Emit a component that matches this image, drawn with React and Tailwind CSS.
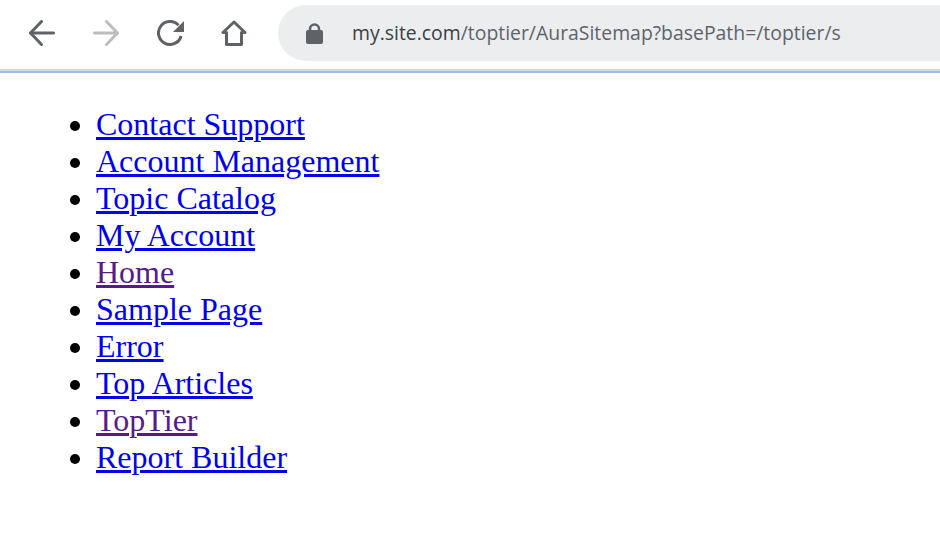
const links = [
  { label: 'Contact Support' },
  { label: 'Account Management' },
  { label: 'Topic Catalog' },
  { label: 'My Account' },
  { label: 'Home', visited: true },
  { label: 'Sample Page' },
  { label: 'Error' },
  { label: 'Top Articles' },
  { label: 'TopTier', visited: true },
  { label: 'Report Builder' },
];

const Toolbar = () => (
  <div className="overflow-hidden">
    <div className="flex items-start h-[69px]">
      <div className="flex items-center h-[66px] pl-[29px] w-[278px] shrink-0 gap-[38px]">
        {/* Back */}
        <svg width="26" height="26" viewBox="0 0 26 26" fill="none" stroke="#5f6368" strokeWidth="3" strokeLinecap="round" strokeLinejoin="round">
          <path d="M24.5 13H2" />
          <path d="M12.5 1.5 1.5 13l11 11.5" />
        </svg>
        {/* Forward */}
        <svg width="26" height="26" viewBox="0 0 26 26" fill="none" stroke="#bdbdbd" strokeWidth="3" strokeLinecap="round" strokeLinejoin="round">
          <path d="M1.5 13H24" />
          <path d="M13.5 1.5 24.5 13l-11 11.5" />
        </svg>
        {/* Reload */}
        <svg width="27" height="26" viewBox="0 0 27 26" fill="none">
          <path d="M21.5 5.2A11.5 11.5 0 1 0 24.1 16" stroke="#5f6368" strokeWidth="3" />
          <path d="M27 1v11H16z" fill="#5f6368" />
        </svg>
        {/* Home */}
        <svg className="-ml-[1px]" width="26" height="26" viewBox="0 0 26 26" fill="none" stroke="#5f6368" strokeWidth="3" strokeLinejoin="round">
          <path d="M13 2 2 12.5h3.5v12h15v-12H24z" />
        </svg>
      </div>
      <div className="mt-[5px] h-[56px] flex-1 -mr-[40px] rounded-l-[28px] bg-[#ebedef] flex items-center pl-[28px]">
        {/* Lock */}
        <svg width="17" height="21" viewBox="0 0 17 21" className="shrink-0">
          <rect x="0" y="7" width="17" height="14" rx="2" fill="#5f6368" />
          <path d="M4 8V6a4.5 4.5 0 0 1 9 0v2" fill="none" stroke="#5f6368" strokeWidth="2.5" />
        </svg>
        <span className="ml-[29px] font-['Open_Sans',sans-serif] text-[19.4px] text-[#5f6368] whitespace-nowrap">
          <span className="text-[#3c4043]">my.site.com</span>/toptier/AuraSitemap?basePath=/toptier/s
        </span>
      </div>
    </div>
    <div className="h-[2px] bg-[#d6d8dc]" />
    <div className="h-[2px] bg-[#9dbfeb]" />
  </div>
);

export default function App() {
  return (
    <div className="w-[940px] h-[559px] bg-white overflow-hidden">
      <Toolbar />
      <ul className="list-disc pl-[96px] pt-[33px] font-['Liberation_Serif',serif] text-[32px] leading-[37px] text-black">
        {links.map((link) => (
          <li key={link.label}>
            <a href="#" className={`underline decoration-[3px] underline-offset-[2px] ${link.visited ? 'text-[#551a8b]' : 'text-[#0000ee]'}`}>
              {link.label}
            </a>
          </li>
        ))}
      </ul>
    </div>
  );
}
